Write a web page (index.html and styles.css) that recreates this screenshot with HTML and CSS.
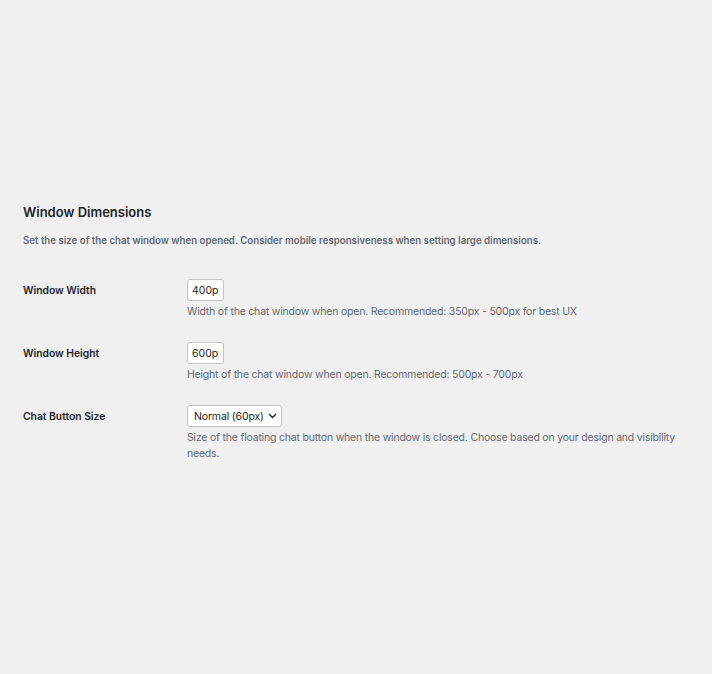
FILE: index.html
```html
<!DOCTYPE html>
<html>
<head>
<meta charset="utf-8">
<link rel="stylesheet" href="styles.css">
</head>
<body>
<div class="wrap">
  <h3 class="section-title">Window Dimensions</h3>
  <p class="section-desc">Set the size of the chat window when opened. Consider mobile responsiveness when setting large dimensions.</p>
  <div class="form">
    <div class="row">
      <div class="label">Window Width</div>
      <div class="field">
        <input class="small-input" type="text" value="400px">
        <p class="desc">Width of the chat window when open. Recommended: 350px - 500px for best UX</p>
      </div>
    </div>
    <div class="row">
      <div class="label">Window Height</div>
      <div class="field">
        <input class="small-input" type="text" value="600px">
        <p class="desc">Height of the chat window when open. Recommended: 500px - 700px</p>
      </div>
    </div>
    <div class="row">
      <div class="label">Chat Button Size</div>
      <div class="field">
        <div class="select">
          <span>Normal (60px)</span>
          <svg class="chev" width="9" height="6" viewBox="0 0 9 6"><path d="M1 1 L4.5 4.5 L8 1" fill="none" stroke="#1d2327" stroke-width="1.4"/></svg>
        </div>
        <p class="desc">Size of the floating chat button when the window is closed. Choose based on your design and visibility needs.</p>
      </div>
    </div>
  </div>
</div>
</body>
</html>
```
FILE: styles.css
```css
html, body {
  margin: 0;
  padding: 0;
  background: #f0f0f1;
}
body {
  font-family: Inter, "Noto Sans", sans-serif;
  color: #1d2327;
  height: 674px;
}
.wrap {
  padding: 204px 23px 0 23px;
}
.section-title {
  margin: 0;
  font-size: 13px;
  font-weight: 600;
  line-height: 17px;
}
.section-desc {
  margin: 13px 0 0 0;
  font-size: 9.7px;
  font-weight: 600;
  color: #646970;
  line-height: 14px;
}
.form {
  margin-top: 31px;
  display: flex;
  flex-direction: column;
  gap: 22px;
}
.row {
  display: grid;
  grid-template-columns: 164px 1fr;
}
.label {
  font-size: 10.3px;
  font-weight: 600;
  line-height: 14px;
  padding-top: 4px;
}
.small-input {
  box-sizing: border-box;
  width: 37px;
  height: 22px;
  border: 1px solid #c3c4c7;
  border-radius: 3px;
  background: #fff;
  font-family: inherit;
  font-size: 10.5px;
  color: #1d2327;
  padding: 0 4px;
  display: block;
  margin: 0;
  outline: none;
}
.select {
  box-sizing: border-box;
  width: 95px;
  height: 22px;
  border: 1px solid #c3c4c7;
  border-radius: 3px;
  background: #fff;
  font-size: 10.5px;
  letter-spacing: -0.15px;
  white-space: nowrap;
  display: flex;
  align-items: center;
  gap: 4px;
  padding: 0 5px 0 6px;
}
.chev {
  flex: none;
}
.desc {
  margin: 3px 0 0 0;
  font-size: 10.5px;
  letter-spacing: -0.2px;
  line-height: 16px;
  color: #646970;
}
```
